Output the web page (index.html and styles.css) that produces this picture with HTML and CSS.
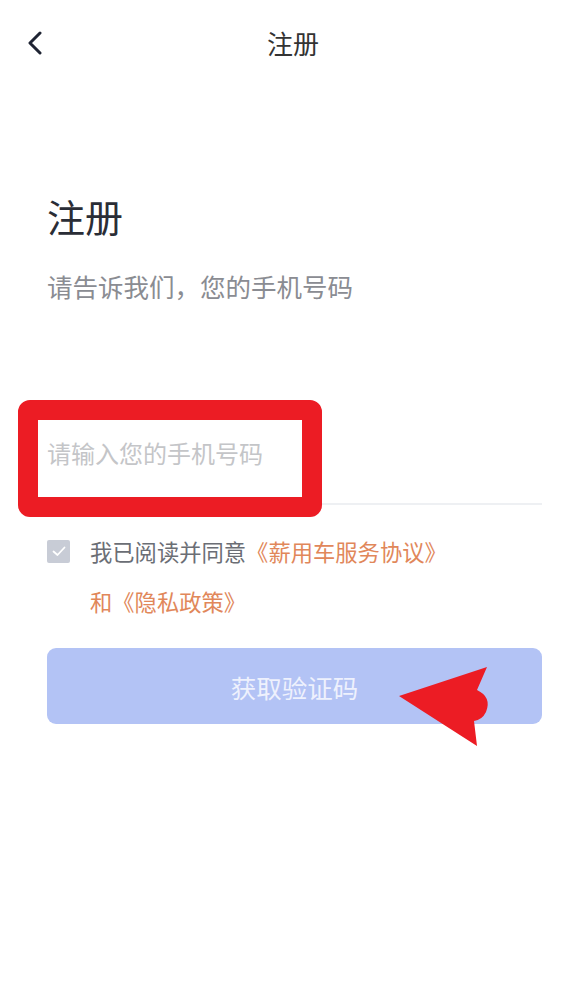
FILE: index.html
```html
<!DOCTYPE html>
<html lang="zh-CN">

<head>
    <meta charset="UTF-8">
    <meta name="viewport" content="width=device-width, initial-scale=1.0">
    <title>注册</title>
    <link rel="stylesheet" href="styles.css">
</head>

<body>
    <div class="page">
        <div class="navbar">
            <button class="back" aria-label="返回">
                <svg width="16" height="24" viewBox="0 0 16 24">
                    <path d="M13 2 L3 12 L13 22" fill="none" stroke="#1f2433" stroke-width="3" stroke-linecap="round" stroke-linejoin="round"/>
                </svg>
            </button>
            <div class="nav-title">注册</div>
        </div>

        <div class="content">
            <h1 class="title">注册</h1>
            <p class="subtitle">请告诉我们，您的手机号码</p>

            <div class="field">
                <div class="highlight"></div>
                <input class="phone" type="tel" placeholder="请输入您的手机号码">
            </div>

            <div class="agree">
                <span class="check">
                    <svg width="14" height="11" viewBox="0 0 14 11">
                        <path d="M1.5 5.5 L5.5 9 L12.5 1.5" fill="none" stroke="#fff" stroke-width="1.8" stroke-linecap="round" stroke-linejoin="round"/>
                    </svg>
                </span>
                <p class="agree-text">我已阅读并同意<span class="link">《薪用车服务协议》</span><br><span class="link">和《隐私政策》</span></p>
            </div>

            <div class="btn-wrap">
                <button class="submit">获取验证码</button>
                <!-- annotation arrow -->
                <svg class="pointer" width="100" height="82" viewBox="0 0 100 82">
                    <path d="M1 29 L89 0 L79 23 Q94 30 88 45 Q84 53 76 54 L79 79 Z" fill="#ec1c24"/>
                </svg>
            </div>
        </div>
    </div>
</body>

</html>
```

FILE: styles.css
```css
* {
    box-sizing: border-box;
}

body {
    margin: 0;
    background: #fff;
    font-family: "Noto Sans CJK SC", "Noto Sans", sans-serif;
}

.page {
    width: 586px;
    height: 990px;
    background: #fff;
}

.navbar {
    height: 88px;
    display: flex;
    align-items: center;
    justify-content: center;
    position: relative;
}

.back {
    position: absolute;
    left: 27px;
    top: 31px;
    background: none;
    border: none;
    padding: 0;
}

.nav-title {
    font-size: 26px;
    color: #333;
    margin-top: -4px;
}

.content {
    padding: 0 44px 0 47px;
}

.title {
    margin: 102px 0 0;
    font-size: 38px;
    font-weight: 400;
    color: #2a2d36;
    line-height: 52px;
}

.subtitle {
    margin: 26px 0 0;
    font-size: 25.5px;
    color: #8a8c92;
    line-height: 36px;
}

.field {
    position: relative;
    margin-top: 96px;
    height: 105px;
    border-bottom: 2px solid #eef0f3;
}

.highlight {
    position: absolute;
    left: -29px;
    top: 0;
    width: 304px;
    height: 117px;
    border: 20px solid #ec1c24;
    border-radius: 12px;
}

.phone {
    position: relative;
    width: 100%;
    height: 103px;
    border: none;
    outline: none;
    background: transparent;
    padding: 2px 0 0;
    font-family: inherit;
    font-size: 24px;
    color: #333;
}

.phone::placeholder {
    color: #c4c5c8;
}

.agree {
    display: flex;
    align-items: flex-start;
    gap: 20px;
    margin-top: 21px;
}

.check {
    flex: none;
    width: 23px;
    height: 23px;
    margin-top: 14px;
    border-radius: 2px;
    background: #c8ccd6;
    display: flex;
    align-items: center;
    justify-content: center;
}

.agree-text {
    margin: 0;
    font-size: 22.3px;
    line-height: 50px;
    color: #6b6e75;
}

.link {
    color: #e1875a;
}

.btn-wrap {
    position: relative;
    margin-top: 22px;
}

.submit {
    display: block;
    width: 100%;
    height: 76px;
    border: none;
    border-radius: 9px;
    background: #b3c3f5;
    color: #eef1fd;
    font-family: inherit;
    font-size: 25.5px;
}

.pointer {
    position: absolute;
    left: 351px;
    top: 19px;
}
```
